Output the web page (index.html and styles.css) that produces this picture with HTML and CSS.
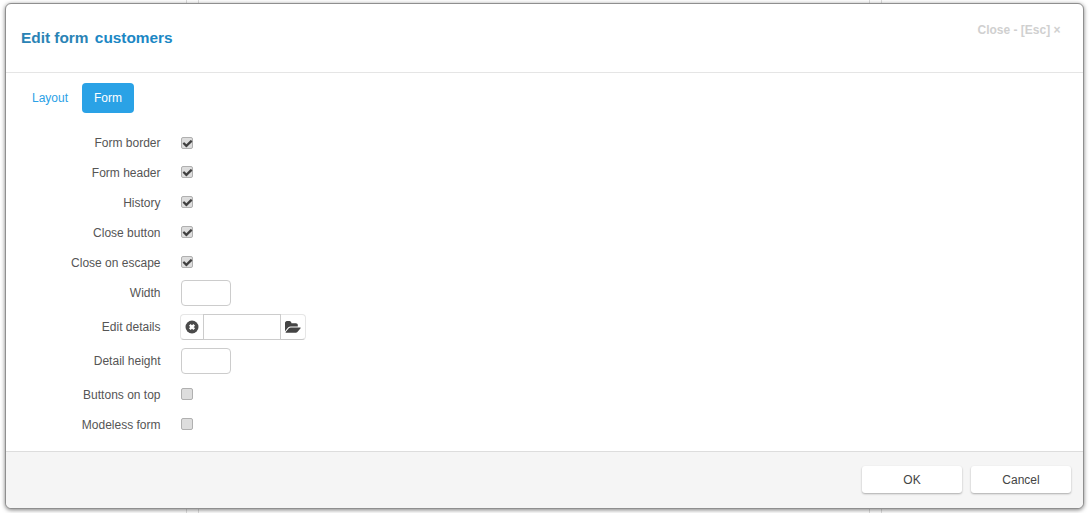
FILE: index.html
```html
<!DOCTYPE html>
<html>
<head>
	<meta charset="utf-8">
	<title>Edit form customers</title>
	<link rel="stylesheet" href="styles.css">
</head>
<body>

	<div class="backdrop">
		<i class="tick tick-a"></i>
		<i class="tick tick-b"></i>
		<i class="tick tick-c"></i>
		<i class="tick tick-d"></i>
	</div>

	<div class="modal">
		<div class="modal-header">
			<h4 class="modal-title">Edit form <span class="title-name">customers</span></h4>
			<a class="close-link">Close - [Esc] ×</a>
		</div>

		<div class="modal-body">
			<ul class="tabs">
				<li class="tab">Layout</li>
				<li class="tab active">Form</li>
			</ul>

			<div class="form">
				<div class="row">
					<label class="row-label">Form border</label>
					<span class="check checked"><svg viewBox="0 0 1792 1792"><path d="M1671 566q0 40-28 68l-724 724-136 136q-28 28-68 28t-68-28l-136-136-362-362q-28-28-28-68t28-68l136-136q28-28 68-28t68 28l294 295 656-657q28-28 68-28t68 28l136 136q28 28 28 68z"/></svg></span>
				</div>
				<div class="row">
					<label class="row-label">Form header</label>
					<span class="check checked"><svg viewBox="0 0 1792 1792"><path d="M1671 566q0 40-28 68l-724 724-136 136q-28 28-68 28t-68-28l-136-136-362-362q-28-28-28-68t28-68l136-136q28-28 68-28t68 28l294 295 656-657q28-28 68-28t68 28l136 136q28 28 28 68z"/></svg></span>
				</div>
				<div class="row">
					<label class="row-label">History</label>
					<span class="check checked"><svg viewBox="0 0 1792 1792"><path d="M1671 566q0 40-28 68l-724 724-136 136q-28 28-68 28t-68-28l-136-136-362-362q-28-28-28-68t28-68l136-136q28-28 68-28t68 28l294 295 656-657q28-28 68-28t68 28l136 136q28 28 28 68z"/></svg></span>
				</div>
				<div class="row">
					<label class="row-label">Close button</label>
					<span class="check checked"><svg viewBox="0 0 1792 1792"><path d="M1671 566q0 40-28 68l-724 724-136 136q-28 28-68 28t-68-28l-136-136-362-362q-28-28-28-68t28-68l136-136q28-28 68-28t68 28l294 295 656-657q28-28 68-28t68 28l136 136q28 28 28 68z"/></svg></span>
				</div>
				<div class="row">
					<label class="row-label">Close on escape</label>
					<span class="check checked"><svg viewBox="0 0 1792 1792"><path d="M1671 566q0 40-28 68l-724 724-136 136q-28 28-68 28t-68-28l-136-136-362-362q-28-28-28-68t28-68l136-136q28-28 68-28t68 28l294 295 656-657q28-28 68-28t68 28l136 136q28 28 28 68z"/></svg></span>
				</div>
				<div class="row row-input">
					<label class="row-label">Width</label>
					<input class="text-input" type="text">
				</div>
				<div class="row row-input">
					<label class="row-label">Edit details</label>
					<div class="lookup">
						<span class="lookup-btn lookup-clear">
							<svg viewBox="0 0 14 14" width="14" height="14">
								<circle cx="7" cy="7" r="6.5" fill="#4a4a4a"/>
								<path d="M4.800 4.800L9.200 9.200M9.200 4.800L4.800 9.200" stroke="#fff" stroke-width="2.400" fill="none"/>
							</svg>
						</span>
						<span class="lookup-value"></span>
						<span class="lookup-btn lookup-open"><svg viewBox="0 0 1920 1792" width="16" height="15"><path d="M1879 952q0 31-31 66l-336 396q-43 51-120.500 86.500t-143.500 35.500h-1088q-34 0-60.500-13t-26.500-43q0-31 31-66l336-396q43-51 120.500-86.500t143.500-35.500h1088q34 0 60.500 13t26.500 43zm-343-344v160h-832q-94 0-197 47.500t-164 119.500l-337 396-5 6q0-4-.5-12.500t-.5-12.500v-960q0-92 66-158t158-66h320q92 0 158 66t66 158v32h544q92 0 158 66t66 158z"/></svg></span>
					</div>
				</div>
				<div class="row row-input">
					<label class="row-label">Detail height</label>
					<input class="text-input" type="text">
				</div>
				<div class="row">
					<label class="row-label">Buttons on top</label>
					<span class="check"></span>
				</div>
				<div class="row">
					<label class="row-label">Modeless form</label>
					<span class="check"></span>
				</div>
			</div>
		</div>

		<div class="modal-footer">
			<button class="btn">OK</button>
			<button class="btn">Cancel</button>
		</div>
	</div>

</body>
</html>
```

FILE: styles.css
```css
html, body {
	height: 100%;
	margin: 0;
}

body {
	background: #fff;
	font-family: "Liberation Sans", Arial, sans-serif;
	font-size: 12px;
	color: #555;
	overflow: hidden;
}

.backdrop {
	position: absolute;
	top: 0;
	left: 0;
	right: 0;
	bottom: 0;
}

.tick {
	position: absolute;
	top: 0;
	bottom: 0;
	width: 1px;
	background: #ddd;
}

.tick-a { left: 186px; }
.tick-b { left: 198px; }
.tick-c { left: 869px; }
.tick-d { left: 881px; }

.modal {
	position: absolute;
	top: 3px;
	left: 5px;
	width: 1079px;
	height: 506px;
	box-sizing: border-box;
	display: flex;
	flex-direction: column;
	background: #fff;
	border: 1px solid #8f8f8f;
	border-radius: 6px;
	box-shadow: 0 1px 4px rgba(0, 0, 0, 0.5);
}

.modal-header {
	display: flex;
	justify-content: space-between;
	height: 69px;
	box-sizing: border-box;
	padding: 0 22.5px 0 15px;
	border-bottom: 1px solid #e5e5e5;
}

.modal-title {
	margin: 25px 0 0;
	font-size: 15.4px;
	line-height: 17px;
	font-weight: bold;
	color: #2a83b5;
}

.title-name {
	margin-left: 2px;
	color: #1b87c4;
}

.close-link {
	margin-top: 19px;
	font-size: 12px;
	line-height: 14px;
	font-weight: bold;
	color: #d0d0d0;
}

.modal-body {
	flex: 1;
	padding: 10px 0 0 15px;
}

.tabs {
	display: flex;
	gap: 3px;
	margin: 0;
	padding: 0;
	list-style: none;
}

.tab {
	padding: 0 11px;
	height: 30px;
	line-height: 30px;
	border-radius: 4px;
	color: #2ba1e6;
}

.tab.active {
	padding: 0 12px;
	background: #2aa2e6;
	color: #fff;
}

.form {
	margin-top: 20px;
}

.row {
	display: flex;
	align-items: center;
	height: 20px;
	margin-bottom: 10px;
}

.row:first-child {
	margin-bottom: 9px;
}

.row-input {
	height: 26px;
	margin-top: -2px;
}

.row-label {
	width: 139.5px;
	margin-right: 20.5px;
	text-align: right;
	color: #555;
}

/* text sits a pixel below the box on the checkbox rows, except the first */
.row:not(:first-child):not(.row-input) .row-label {
	margin-top: 2px;
}

.check {
	display: flex;
	align-items: center;
	justify-content: center;
	width: 12px;
	height: 12px;
	background: #ddd;
	border: 1px solid #b0b0b0;
	border-radius: 2px;
	box-sizing: border-box;
}

.check svg {
	flex: none;
	width: 11px;
	height: 11px;
	fill: #404040;
}

.text-input {
	width: 50px;
	height: 26px;
	box-sizing: border-box;
	margin: 0;
	padding: 0 6px;
	background: #fff;
	border: 1px solid #ccc;
	border-radius: 4px;
}

.lookup {
	display: flex;
	height: 26px;
	margin-left: -1px;
}

.lookup-btn {
	display: flex;
	align-items: center;
	justify-content: center;
	box-sizing: border-box;
	background: #fff;
	border: 1px solid #e6e6e6;
	border-bottom-color: #c8c8c8;
	fill: #444;
}

.lookup-clear {
	width: 23px;
	border-right: 0;
	border-radius: 4px 0 0 4px;
}

.lookup-open {
	width: 25px;
	border-left: 0;
	border-radius: 0 4px 4px 0;
}

.lookup-value {
	width: 78px;
	height: 26px;
	box-sizing: border-box;
	background: #fff;
	border: 1px solid #ccc;
}

.modal-footer {
	display: flex;
	justify-content: flex-end;
	gap: 9px;
	height: 57px;
	box-sizing: border-box;
	padding: 14px 12px 0 0;
	background: #f5f5f5;
	border-top: 1px solid #ddd;
	border-radius: 0 0 6px 6px;
}

.btn {
	width: 100px;
	height: 27px;
	padding: 0;
	background: #fff;
	border: 0;
	border-radius: 3px;
	box-shadow: 0 1px 2px rgba(0, 0, 0, 0.3);
	font-family: inherit;
	font-size: 12px;
	color: #444;
}
```
